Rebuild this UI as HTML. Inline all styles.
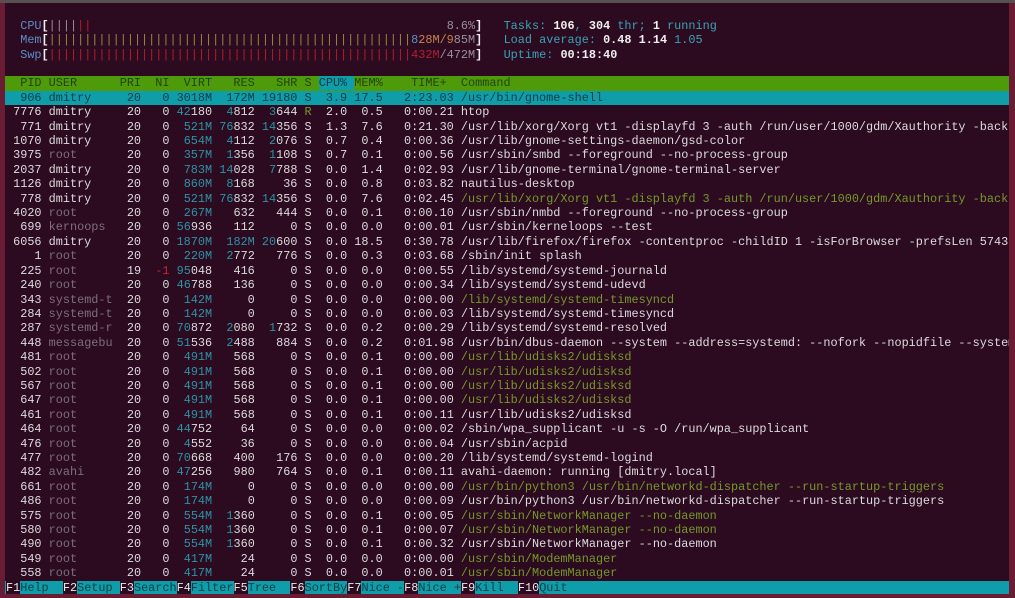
<!DOCTYPE html>
<html><head><meta charset="utf-8"><style>
html,body{margin:0;padding:0;background:#6a1c34;width:1015px;height:598px;overflow:hidden}
#top{position:absolute;left:0;top:0;width:1015px;height:3px;background:#57504e}
#t{position:absolute;left:5px;top:3px;width:1004px;height:591px;background:#2c0a20;overflow:hidden}
pre{margin:0;padding:1.4px 0 0 1px;font-family:"Liberation Mono",monospace;font-size:11.85px;line-height:14.4px;color:#dcdcdc;white-space:pre}
x-d{color:#7c7078}x-k{color:#2d93a6}x-g{color:#76992a}x-r{color:#c0282e}
x-l{color:#5a8fc8}x-w{color:#f0f0f0;font-weight:bold}x-t{color:#3aa3b5}
x-b{color:#b02030}x-y{color:#9a8a45}x-o{color:#c8844a}x-e{color:#9a9098}
.h{display:block;background:#4f9a0a;color:#22440c;margin-left:-1px;padding-left:1px}
.h x-c{background:#0f9ea9;color:#0f3a40}
.s{display:block;background:#0f9ea9;color:#0d3d45;margin-left:-1px;padding-left:1px}
.f{display:block;margin-left:-1px;padding-left:1px;background:#0f9ea9}
.f x-f{background:#2c0a20;color:#e8e8e8}
.f x-n{color:#0d3d45}
</style></head><body><div id="top"></div><div id="t"><pre>

  <x-l>CPU</x-l><x-w>[</x-w><x-e>||||</x-e><x-b>||</x-b>                                                  <x-e>8.6%</x-e><x-w>]</x-w>   <x-t>Tasks:</x-t> <x-w>106</x-w><x-t>,</x-t> <x-w>304</x-w> <x-t>thr;</x-t> <x-w>1</x-w> <x-t>running</x-t>
  <x-l>Mem</x-l><x-w>[</x-w><x-y>|||||||||||||||||||||||||||||||||||||||||||||||||||</x-y><x-l>8</x-l><x-o>28M/9</x-o><x-e>85M</x-e><x-w>]</x-w>   <x-t>Load average:</x-t> <x-w>0.48</x-w> <x-w>1.14</x-w> <x-t>1.05</x-t>
  <x-l>Swp</x-l><x-w>[</x-w><x-b>|||||||||||||||||||||||||||||||||||||||||||||||||||432M</x-b><x-e>/472M</x-e><x-w>]</x-w>   <x-t>Uptime:</x-t> <x-w>00:18:40</x-w>

<span class="h">  PID USER      PRI  NI  VIRT   RES   SHR S <x-c>CPU% </x-c>MEM%    TIME+  Command                                                                               </span><span class="s">  906 dmitry     20   0 3018M  172M 19180 S  3.9 17.5   2:23.03 /usr/bin/gnome-shell                                                                        </span> 7776 dmitry     20   0 <x-k>42</x-k>180  <x-k>4</x-k>812  <x-k>3</x-k>644 <x-g>R</x-g>  2.0  0.5   0:00.21 htop
  771 dmitry     20   0  <x-k>521M</x-k> <x-k>76</x-k>832 <x-k>14</x-k>356 S  1.3  7.6   0:21.30 /usr/lib/xorg/Xorg vt1 -displayfd 3 -auth /run/user/1000/gdm/Xauthority -background none
 1070 dmitry     20   0  <x-k>654M</x-k>  <x-k>4</x-k>112  <x-k>2</x-k>076 S  0.7  0.4   0:00.36 /usr/lib/gnome-settings-daemon/gsd-color
 3975 <x-d>root     </x-d>  20   0  <x-k>357M</x-k>  <x-k>1</x-k>356  <x-k>1</x-k>108 S  0.7  0.1   0:00.56 /usr/sbin/smbd --foreground --no-process-group
 2037 dmitry     20   0  <x-k>783M</x-k> <x-k>14</x-k>028  <x-k>7</x-k>788 S  0.0  1.4   0:02.93 /usr/lib/gnome-terminal/gnome-terminal-server
 1126 dmitry     20   0  <x-k>860M</x-k>  <x-k>8</x-k>168    36 S  0.0  0.8   0:03.82 nautilus-desktop
  778 dmitry     20   0  <x-k>521M</x-k> <x-k>76</x-k>832 <x-k>14</x-k>356 S  0.0  7.6   0:02.45 <x-g>/usr/lib/xorg/Xorg vt1 -displayfd 3 -auth /run/user/1000/gdm/Xauthority -background none</x-g>
 4020 <x-d>root</x-d>       20   0  <x-k>267M</x-k>   632   444 S  0.0  0.1   0:00.10 /usr/sbin/nmbd --foreground --no-process-group
  699 <x-d>kernoops</x-d>   20   0 <x-k>56</x-k>936   112     0 S  0.0  0.0   0:00.01 /usr/sbin/kerneloops --test
 6056 dmitry     20   0 <x-k>1870M</x-k>  <x-k>182M</x-k> <x-k>20</x-k>600 S  0.0 18.5   0:30.78 /usr/lib/firefox/firefox -contentproc -childID 1 -isForBrowser -prefsLen 5743
    1 <x-d>root</x-d>       20   0  <x-k>220M</x-k>  <x-k>2</x-k>772   776 S  0.0  0.3   0:03.68 /sbin/init splash
  225 <x-d>root</x-d>       19  <x-r>-1</x-r> <x-k>95</x-k>048   416     0 S  0.0  0.0   0:00.55 /lib/systemd/systemd-journald
  240 <x-d>root</x-d>       20   0 <x-k>46</x-k>788   136     0 S  0.0  0.0   0:00.34 /lib/systemd/systemd-udevd
  343 <x-d>systemd-t</x-d>  20   0  <x-k>142M</x-k>     0     0 S  0.0  0.0   0:00.00 <x-g>/lib/systemd/systemd-timesyncd</x-g>
  284 <x-d>systemd-t</x-d>  20   0  <x-k>142M</x-k>     0     0 S  0.0  0.0   0:00.03 /lib/systemd/systemd-timesyncd
  287 <x-d>systemd-r</x-d>  20   0 <x-k>70</x-k>872  <x-k>2</x-k>080  <x-k>1</x-k>732 S  0.0  0.2   0:00.29 /lib/systemd/systemd-resolved
  448 <x-d>messagebu</x-d>  20   0 <x-k>51</x-k>536  <x-k>2</x-k>488   884 S  0.0  0.2   0:01.98 /usr/bin/dbus-daemon --system --address=systemd: --nofork --nopidfile --systemd-activation
  481 <x-d>root</x-d>       20   0  <x-k>491M</x-k>   568     0 S  0.0  0.1   0:00.00 <x-g>/usr/lib/udisks2/udisksd</x-g>
  502 <x-d>root</x-d>       20   0  <x-k>491M</x-k>   568     0 S  0.0  0.1   0:00.00 <x-g>/usr/lib/udisks2/udisksd</x-g>
  567 <x-d>root</x-d>       20   0  <x-k>491M</x-k>   568     0 S  0.0  0.1   0:00.00 <x-g>/usr/lib/udisks2/udisksd</x-g>
  647 <x-d>root</x-d>       20   0  <x-k>491M</x-k>   568     0 S  0.0  0.1   0:00.00 <x-g>/usr/lib/udisks2/udisksd</x-g>
  461 <x-d>root</x-d>       20   0  <x-k>491M</x-k>   568     0 S  0.0  0.1   0:00.11 /usr/lib/udisks2/udisksd
  464 <x-d>root</x-d>       20   0 <x-k>44</x-k>752    64     0 S  0.0  0.0   0:00.02 /sbin/wpa_supplicant -u -s -O /run/wpa_supplicant
  476 <x-d>root</x-d>       20   0  <x-k>4</x-k>552    36     0 S  0.0  0.0   0:00.04 /usr/sbin/acpid
  477 <x-d>root</x-d>       20   0 <x-k>70</x-k>668   400   176 S  0.0  0.0   0:00.20 /lib/systemd/systemd-logind
  482 <x-d>avahi</x-d>      20   0 <x-k>47</x-k>256   980   764 S  0.0  0.1   0:00.11 avahi-daemon: running [dmitry.local]
  661 <x-d>root</x-d>       20   0  <x-k>174M</x-k>     0     0 S  0.0  0.0   0:00.00 <x-g>/usr/bin/python3 /usr/bin/networkd-dispatcher --run-startup-triggers</x-g>
  486 <x-d>root</x-d>       20   0  <x-k>174M</x-k>     0     0 S  0.0  0.0   0:00.09 /usr/bin/python3 /usr/bin/networkd-dispatcher --run-startup-triggers
  575 <x-d>root</x-d>       20   0  <x-k>554M</x-k>  <x-k>1</x-k>360     0 S  0.0  0.1   0:00.05 <x-g>/usr/sbin/NetworkManager --no-daemon</x-g>
  580 <x-d>root</x-d>       20   0  <x-k>554M</x-k>  <x-k>1</x-k>360     0 S  0.0  0.1   0:00.07 <x-g>/usr/sbin/NetworkManager --no-daemon</x-g>
  490 <x-d>root</x-d>       20   0  <x-k>554M</x-k>  <x-k>1</x-k>360     0 S  0.0  0.1   0:00.32 /usr/sbin/NetworkManager --no-daemon
  549 <x-d>root</x-d>       20   0  <x-k>417M</x-k>    24     0 S  0.0  0.0   0:00.00 <x-g>/usr/sbin/ModemManager</x-g>
  558 <x-d>root</x-d>       20   0  <x-k>417M</x-k>    24     0 S  0.0  0.0   0:00.01 <x-g>/usr/sbin/ModemManager</x-g>
<span class="f"><x-f>F1</x-f><x-n>Help  </x-n><x-f>F2</x-f><x-n>Setup </x-n><x-f>F3</x-f><x-n>Search</x-n><x-f>F4</x-f><x-n>Filter</x-n><x-f>F5</x-f><x-n>Tree  </x-n><x-f>F6</x-f><x-n>SortBy</x-n><x-f>F7</x-f><x-n>Nice -</x-n><x-f>F8</x-f><x-n>Nice +</x-n><x-f>F9</x-f><x-n>Kill  </x-n><x-f>F10</x-f><x-n>Quit                                                                      </x-n></span></pre></div></body></html>
